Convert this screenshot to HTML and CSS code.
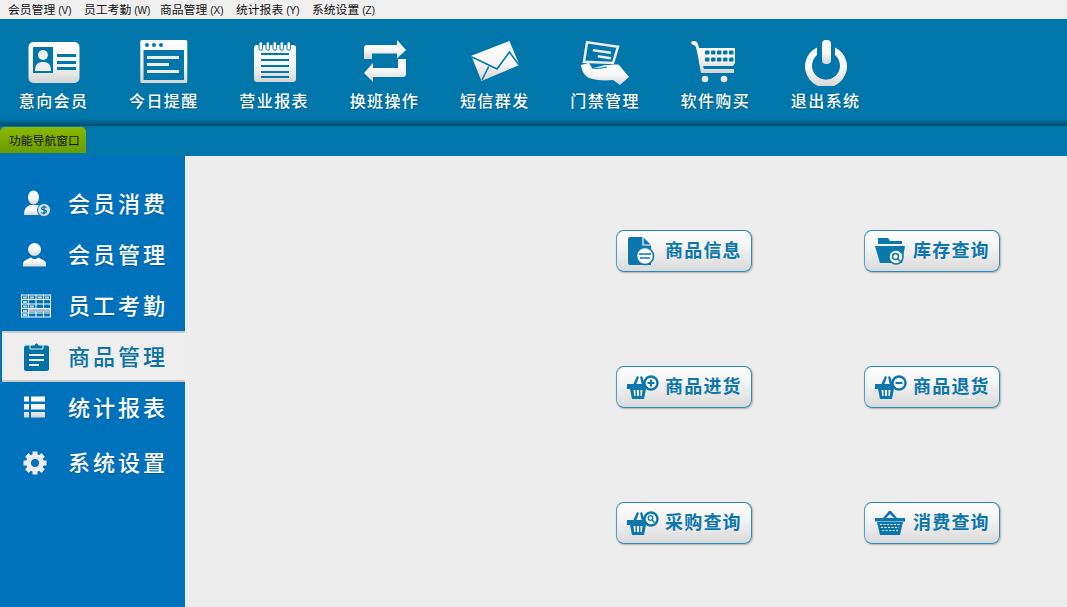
FILE: index.html
```html
<!DOCTYPE html>
<html lang="zh-CN">
<head>
    <meta charset="UTF-8">
    <title>会员管理系统</title>
    <link rel="stylesheet" href="styles.css">
</head>
<body>
    <svg class="svg-defs" width="0" height="0" aria-hidden="true">
        <defs>
            <linearGradient id="silver" x1="0" y1="0" x2="0" y2="1">
                <stop offset="0" stop-color="#ffffff"/>
                <stop offset="0.55" stop-color="#f6f6f6"/>
                <stop offset="1" stop-color="#d4d4d4"/>
            </linearGradient>
            <symbol id="basket" viewBox="0 0 34 34">
                <path d="M8 15l4-9 2 1-3 8zM17 15l-2-8 2-1 3 9z" fill="#0b77ad"/>
                <path d="M2 14h21v5h-2l-2 10H7L5 19H2z" fill="#0b77ad"/>
                <path d="M8.500 20h2v6h-1.200zM12 20h2v6h-2zM15.500 20h2l-.800 6h-1.200z" fill="#fff"/>
            </symbol>
        </defs>
    </svg>

    <nav class="menu-bar">
        <span>会员管理<small>(V)</small></span>
        <span>员工考勤<small>(W)</small></span>
        <span>商品管理<small>(X)</small></span>
        <span>统计报表<small>(Y)</small></span>
        <span>系统设置<small>(Z)</small></span>
    </nav>

    <header class="toolbar">
        <a class="tool">
            <svg viewBox="0 0 60 48" width="60" height="48">
                <rect x="4.500" y="4" width="51" height="41" rx="5" fill="url(#silver)"/>
                <rect x="9" y="9" width="20" height="26" fill="#0076ab"/>
                <circle cx="19" cy="17" r="5" fill="#eee"/>
                <path d="M11 33c0-7 3-9 8-9s8 2 8 9z" fill="#eee"/>
                <path d="M33 16h19v3H33zM33 23h19v3H33zM33 29h19v3H33z" fill="#0076ab"/>
            </svg>
            <span>意向会员</span>
        </a>
        <a class="tool">
            <svg viewBox="0 0 60 48" width="60" height="48">
                <rect x="6.300" y="2" width="47" height="43" rx="1.500" fill="url(#silver)"/>
                <rect x="9.500" y="12" width="40.500" height="30" fill="#0076ab"/>
                <circle cx="13" cy="7" r="2" fill="#0076ab"/>
                <circle cx="20" cy="7" r="2" fill="#0076ab"/>
                <circle cx="27" cy="7" r="2" fill="#0076ab"/>
                <path d="M13 18h32v3H13zM13 25h22v3H13zM13 32h32v3H13z" fill="#eee"/>
            </svg>
            <span>今日提醒</span>
        </a>
        <a class="tool">
            <svg viewBox="0 0 60 48" width="60" height="48">
                <rect x="10" y="7" width="42" height="37" rx="3" fill="url(#silver)"/>
                <path d="M15 5.500a1.800 1.800 0 0 1 3.600 0v5a1.800 1.800 0 0 1-3.600 0zM22 5.500a1.800 1.800 0 0 1 3.600 0v5a1.800 1.800 0 0 1-3.600 0zM29 5.500a1.800 1.800 0 0 1 3.600 0v5a1.800 1.800 0 0 1-3.600 0zM36 5.500a1.800 1.800 0 0 1 3.600 0v5a1.800 1.800 0 0 1-3.600 0zM43 5.500a1.800 1.800 0 0 1 3.600 0v5a1.800 1.800 0 0 1-3.600 0z" fill="#fff" stroke="#0076ab" stroke-width="1"/>
                <path d="M17 15h28v2H17zM17 21h28v2H17zM17 27h28v2H17zM17 33h28v2H17zM17 38h28v2H17z" fill="#0076ab"/>
            </svg>
            <span>营业报表</span>
        </a>
        <a class="tool">
            <svg viewBox="0 0 60 48" width="60" height="48">
                <path d="M10 21V10a3 3 0 0 1 3-3h30V2l9 10-9 8.500V15.500H18V21z" fill="url(#silver)"/>
                <path d="M52 21v15a3 3 0 0 1-3 3H19v5l-9-9 9-10v5h25v-9z" fill="url(#silver)"/>
            </svg>
            <span>换班操作</span>
        </a>
        <a class="tool">
            <svg viewBox="0 0 60 48" width="60" height="48">
                <path d="M6.400 17.700L44.400 3l10 24-38 16z" fill="url(#silver)"/>
                <path d="M7 19l25 12 12.400-17L54 27M17 42l6.700-13.500" fill="none" stroke="#0076ab" stroke-width="1.500"/>
            </svg>
            <span>短信群发</span>
        </a>
        <a class="tool">
            <svg viewBox="0 0 60 48" width="60" height="48">
                <path d="M12 4.300l31 4.400-5 16.300-29-1.300z" fill="none" stroke="#eee" stroke-width="2.500"/>
                <path d="M18 11l18 2.500-.400 2.500-18-2.500zM23 17l13 2-.400 2.500-13-2z" fill="#eee"/>
                <path d="M6 27l8-2 3 5c5 0 10-3 15-3s10-1 12 0l10 12-9 8-7-5c-10 1-18 0-24-2-4-2-7-6-8-13z" fill="url(#silver)"/>
                <path d="M17 30c5 1 10 0 15-1" fill="none" stroke="#0076ab" stroke-width="1"/>
            </svg>
            <span>门禁管理</span>
        </a>
        <a class="tool">
            <svg viewBox="0 0 60 48" width="60" height="48">
                <path d="M6 5a2.500 2.500 0 0 1 3-2c3 .500 4 2 5 7h36v15l-2 3H18l1 3h30v4H16C15 30 13 17 11 9 10 7 7 7 6 5z" fill="url(#silver)"/>
                <g fill="#0076ab">
                    <rect x="20" y="12.500" width="4.500" height="4" rx="1"/>
                    <rect x="26" y="12.500" width="4.500" height="4" rx="1"/>
                    <rect x="32" y="12.500" width="4.500" height="4" rx="1"/>
                    <rect x="38" y="12.500" width="4.500" height="4" rx="1"/>
                    <rect x="44" y="12.500" width="4.500" height="4" rx="1"/>
                    <rect x="20" y="19.500" width="4.500" height="4" rx="1"/>
                    <rect x="26" y="19.500" width="4.500" height="4" rx="1"/>
                    <rect x="32" y="19.500" width="4.500" height="4" rx="1"/>
                    <rect x="38" y="19.500" width="4.500" height="4" rx="1"/>
                    <rect x="44" y="19.500" width="4.500" height="4" rx="1"/>
                </g>
                <circle cx="20" cy="41" r="3.300" fill="#e6e6e6"/>
                <circle cx="39" cy="41" r="3.300" fill="#e6e6e6"/>
            </svg>
            <span>软件购买</span>
        </a>
        <a class="tool">
            <svg viewBox="0 0 60 48" width="60" height="48">
                <path d="M21 9.500v7.500a14 14 0 1 0 18 0V9.500a21 21 0 1 1-18 0z" fill="url(#silver)"/>
                <rect x="26" y="2" width="9" height="24" rx="4" fill="url(#silver)"/>
            </svg>
            <span>退出系统</span>
        </a>
    </header>

    <div class="tab-bar">
        <div class="tab">功能导航窗口</div>
    </div>

    <div class="layout">
        <aside class="sidebar">
            <a class="side-item">
                <svg viewBox="0 0 34 30" width="34" height="30">
                    <ellipse cx="14.500" cy="8.500" rx="5.500" ry="7" fill="url(#silver)"/>
                    <path d="M5 26c0-6 2-8 6-10h7c3 .500 4 1 5 2-3 1-5 5-3 8z" fill="url(#silver)"/>
                    <circle cx="25" cy="21" r="6.500" fill="#d9e3ea" stroke="#0072bc" stroke-width="1"/>
                    <path d="M27.500 18.500c-1-1-5-1-5 1s5 1 5 3-4 2-5.500 1M25 16.500v9" fill="none" stroke="#0072bc" stroke-width="1.300"/>
                </svg>
                <span>会员消费</span>
            </a>
            <a class="side-item">
                <svg viewBox="0 0 34 30" width="34" height="30">
                    <ellipse cx="15.500" cy="9.500" rx="6.500" ry="6.500" fill="url(#silver)"/>
                    <path d="M4 26.500v-3c0-3 5-4.500 8-6 2 2 5 2 7 0 3 1.500 8 3 8 6v3z" fill="url(#silver)"/>
                </svg>
                <span>会员管理</span>
            </a>
            <a class="side-item">
                <svg viewBox="0 0 34 30" width="34" height="30">
                    <rect x="2.500" y="4" width="29" height="22" fill="none" stroke="#fff"/>
                    <path d="M9.500 4v22M17 4v22M24.500 4v22M2.500 8.500h29M2.500 13h29M2.500 17.500h29M2.500 22h29" stroke="#fff" stroke-width="1" fill="none"/>
                    <path d="M4 5.500h4v2H4zM11 5.500h4v2h-4zM18.500 5.500h4.500v2h-4.500zM26 5.500h4v2h-4zM4 10h4v2H4zM4 14.500h4v2H4zM11 14.500h4v2h-4zM4 19h4v2H4zM4 23h4v2H4z" fill="#c9d7e2"/>
                    <path d="M10 18h21v3H10z" fill="#9fbfd6"/>
                </svg>
                <span>员工考勤</span>
            </a>
            <a class="side-item active">
                <svg viewBox="0 0 34 30" width="34" height="30">
                    <rect x="5" y="3.500" width="25" height="25.500" rx="2" fill="#0072a8"/>
                    <path d="M11 3h4.500a2 2 0 0 1 4 0H24v4H11z" fill="#0072a8" stroke="#eee" stroke-width="1"/>
                    <path d="M10 12h15v2H10zM10 17h15v2H10zM10 22h10v2H10z" fill="#eee"/>
                </svg>
                <span>商品管理</span>
            </a>
            <a class="side-item">
                <svg viewBox="0 0 34 30" width="34" height="30">
                    <path d="M5 3.500h5v5H5zM12 3.500h14v5H12zM5 11h5v5.500H5zM12 11h14v5.500H12zM5 19h5v5.500H5zM12 19h14v5.500H12z" fill="url(#silver)"/>
                </svg>
                <span>统计报表</span>
            </a>
            <a class="side-item system">
                <svg viewBox="0 0 34 30" width="34" height="30">
                    <circle cx="16" cy="15" r="6.500" fill="none" stroke="#eee" stroke-width="5"/>
                    <g fill="#eee">
                        <rect x="13.500" y="3.500" width="5" height="5"/>
                        <rect x="13.500" y="3.500" width="5" height="5" transform="rotate(45 16 15)"/>
                        <rect x="13.500" y="3.500" width="5" height="5" transform="rotate(90 16 15)"/>
                        <rect x="13.500" y="3.500" width="5" height="5" transform="rotate(135 16 15)"/>
                        <rect x="13.500" y="3.500" width="5" height="5" transform="rotate(180 16 15)"/>
                        <rect x="13.500" y="3.500" width="5" height="5" transform="rotate(225 16 15)"/>
                        <rect x="13.500" y="3.500" width="5" height="5" transform="rotate(270 16 15)"/>
                        <rect x="13.500" y="3.500" width="5" height="5" transform="rotate(315 16 15)"/>
                    </g>
                </svg>
                <span>系统设置</span>
            </a>
        </aside>

        <main class="main-panel">
            <a class="panel-btn">
                <svg viewBox="0 0 34 34" width="34" height="34">
                    <path d="M3 5a2 2 0 0 1 2-2h13l8 8v20H5a2 2 0 0 1-2-2z" fill="#0b77ad"/>
                    <path d="M18 3v8h8" fill="none" stroke="#fff" stroke-width="1.200"/>
                    <circle cx="20" cy="22" r="8.500" fill="#fff" stroke="#0b77ad" stroke-width="1.600"/>
                    <path d="M14 20h12M15 24h10" stroke="#0b77ad" stroke-width="1.600"/>
                </svg>
                <span>商品信息</span>
            </a>
            <a class="panel-btn">
                <svg viewBox="0 0 34 34" width="34" height="34">
                    <path d="M5 4h10l2 3h12v3H5z" fill="#0b77ad"/>
                    <path d="M2 12h30l-3 17H7z" fill="#0b77ad"/>
                    <circle cx="23" cy="23" r="7" fill="#fff" stroke="#0b77ad" stroke-width="1.500"/>
                    <circle cx="22.500" cy="22.500" r="3" fill="none" stroke="#0b77ad" stroke-width="1.500"/>
                    <path d="M25 25l3 3" stroke="#0b77ad" stroke-width="1.500"/>
                </svg>
                <span>库存查询</span>
            </a>
            <a class="panel-btn">
                <svg viewBox="0 0 34 34" width="34" height="34">
                    <use href="#basket" width="34" height="34"/>
                    <circle cx="26" cy="13" r="6.500" fill="#fff" stroke="#0b77ad" stroke-width="2.400"/>
                    <path d="M22.500 13h7M26 9.500v7" stroke="#0b77ad" stroke-width="2.200"/>
                </svg>
                <span>商品进货</span>
            </a>
            <a class="panel-btn">
                <svg viewBox="0 0 34 34" width="34" height="34">
                    <use href="#basket" width="34" height="34"/>
                    <circle cx="26" cy="13" r="6.500" fill="#fff" stroke="#0b77ad" stroke-width="2.400"/>
                    <path d="M22.500 13h7" stroke="#0b77ad" stroke-width="2.200"/>
                </svg>
                <span>商品退货</span>
            </a>
            <a class="panel-btn">
                <svg viewBox="0 0 34 34" width="34" height="34">
                    <use href="#basket" width="34" height="34"/>
                    <circle cx="26" cy="13" r="6.500" fill="#fff" stroke="#0b77ad" stroke-width="2.400"/>
                    <circle cx="25.500" cy="12" r="2.300" fill="none" stroke="#0b77ad" stroke-width="1.300"/>
                    <path d="M27 14l2.500 2.500" stroke="#0b77ad" stroke-width="1.500"/>
                </svg>
                <span>采购查询</span>
            </a>
            <a class="panel-btn">
                <svg viewBox="0 0 34 34" width="34" height="34">
                    <path d="M2 12h30v3.500H2zM4 16h26l-3 13H7z" fill="#0b77ad"/>
                    <path d="M10 12l6-7h2l6 7h-3l-4-4-4 4z" fill="#0b77ad"/>
                    <path d="M7 18.500h20M8 21.500h18M9 24.500h16" stroke="#fff" stroke-width="1.200" stroke-dasharray="2 1.500"/>
                </svg>
                <span>消费查询</span>
            </a>
        </main>
    </div>
</body>
</html>
```

FILE: styles.css
```css
* {
    margin: 0;
    padding: 0;
    box-sizing: border-box;
}

html, body {
    height: 100%;
    overflow: hidden;
}

body {
    font-family: "Noto Sans CJK SC", "Liberation Sans", sans-serif;
    background: #ededed;
    display: flex;
    flex-direction: column;
}

.svg-defs {
    display: block;
    flex: none;
}

.menu-bar {
    height: 19px;
    flex: none;
    display: flex;
    gap: 4px;
    padding-left: 8px;
    background: #efefef;
    font-size: 11.800px;
    line-height: 18px;
    color: #111;
}

.menu-bar span {
    width: 72px;
    white-space: nowrap;
}

.menu-bar small {
    font-family: "Liberation Sans", sans-serif;
    font-size: 10px;
    margin-left: 3px;
}

.toolbar {
    height: 107px;
    flex: none;
    display: flex;
    padding-top: 19px;
    background: linear-gradient(#0076ab 100px, #03506f 106px, #03506f);
}

.tool {
    width: 110.300px;
    flex: none;
    display: flex;
    flex-direction: column;
    align-items: center;
    color: #fff;
    font-size: 16px;
    font-weight: 500;
    letter-spacing: 1.400px;
    line-height: 22px;
    text-shadow: 0 1px 1px rgba(0, 0, 0, 0.25);
}

.tool:first-child {
    margin-left: -1.600px;
}

.tool span {
    margin-top: 3px;
}

.tab-bar {
    height: 30px;
    flex: none;
    padding-top: 1px;
    background: #0076ab;
}

.tab {
    width: 86px;
    height: 26px;
    padding-left: 9px;
    border-radius: 5px 5px 0 0;
    background: linear-gradient(#8ab800, #6a9c00);
    color: #111;
    font-size: 11.800px;
    line-height: 26px;
}

.layout {
    flex: 1;
    display: flex;
    min-height: 0;
}

.sidebar {
    width: 185px;
    flex: none;
    padding-top: 22px;
    background: #0072bc;
}

.side-item {
    height: 51px;
    display: flex;
    align-items: center;
    gap: 15px;
    padding-left: 19px;
    color: #fff;
    font-size: 22px;
    font-weight: 500;
    letter-spacing: 3px;
    text-shadow: 0 1px 1px rgba(0, 0, 0, 0.2);
}

.side-item span {
    margin-bottom: 4px;
}

.side-item.active {
    margin-left: 2px;
    padding-left: 17px;
    background: #eeeeee;
    border-top: 2px solid #c9c9c9;
    border-bottom: 2px solid #c9c9c9;
    color: #0b72a8;
    text-shadow: none;
}

.side-item.system {
    margin-top: 4px;
}

.main-panel {
    flex: 1;
    display: grid;
    grid-template-columns: 136px 136px;
    grid-auto-rows: 42px;
    column-gap: 112px;
    row-gap: 94px;
    align-content: start;
    padding: 74px 0 0 431px;
    background: #ededed;
}

.panel-btn {
    display: flex;
    align-items: center;
    gap: 6px;
    padding-left: 8px;
    border: 1px solid #2a8ab8;
    border-left-color: #4a9cc4;
    border-radius: 8px;
    background: linear-gradient(#ffffff, #f4f4f4 40%, #d9d9d9);
    box-shadow: 1px 1px 2px rgba(0, 0, 0, 0.25);
    color: #0b77ad;
    font-size: 18px;
    font-weight: 700;
    letter-spacing: 1.200px;
}

.panel-btn span {
    margin-bottom: 4px;
}
```
